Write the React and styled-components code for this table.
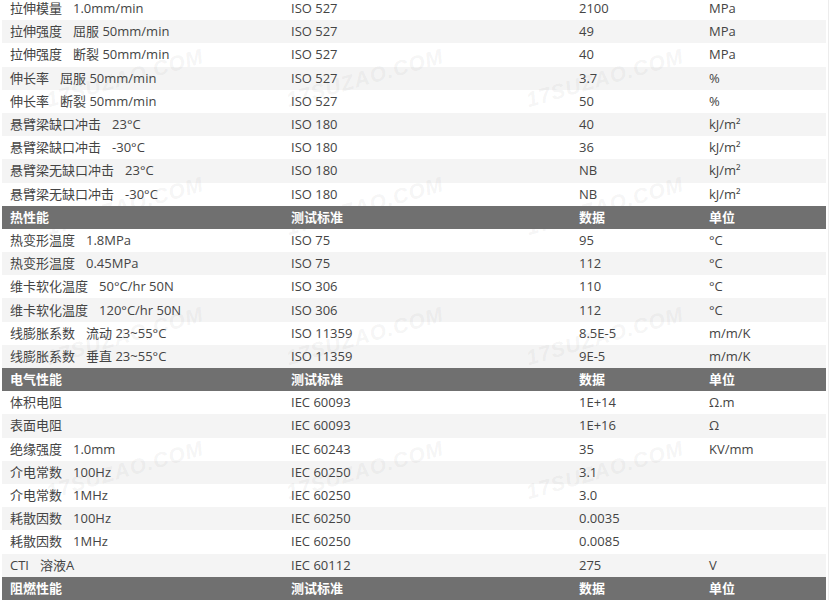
import React from "react";
import styled, { createGlobalStyle } from "styled-components";

const Global = createGlobalStyle`
  html, body { margin: 0; padding: 0; background: #fff; overflow: hidden; }
  body { font-family: "Open Sans", "Noto Sans CJK SC", sans-serif; }
`;

const Frame = styled.div`
  position: relative;
  width: 828px;
  height: 600px;
  overflow: hidden;
  border-right: 1px solid #ececec;
`;

const Table = styled.div`
  margin: -3px 0 0 2px;
  width: 824px;
  display: flex;
  flex-direction: column;
`;

const Row = styled.div`
  display: grid;
  grid-template-columns: 281px 288px 130px 1fr;
  height: 23.2px;
  align-items: center;
  background: ${(p) => (p.$head ? "#707070" : p.$alt ? "#f4f4f4" : "#ffffff")};
  color: ${(p) => (p.$head ? "#ffffff" : "#444444")};
  font-weight: ${(p) => (p.$head ? 700 : 400)};
  font-size: 13px;
`;

const Cell = styled.div`
  padding-left: 8px;
  white-space: pre;
  line-height: 23px;
  overflow: hidden;
`;

const Cond = styled.span`
  margin-left: ${(p) => p.$gap || 11}px;
`;

const Mark = styled.div`
  position: absolute;
  transform: translate(-50%, -50%) rotate(-16deg);
  font-family: "Liberation Sans", Arial, sans-serif;
  font-weight: 700;
  font-style: italic;
  font-size: 21px;
  letter-spacing: 1px;
  color: rgba(120, 120, 120, 0.08);
  pointer-events: none;
  white-space: nowrap;
`;

const sections = [
  {
    head: null,
    rows: [
      ["拉伸模量", "1.0mm/min", "ISO 527", "2100", "MPa"],
      ["拉伸强度", "屈服 50mm/min", "ISO 527", "49", "MPa"],
      ["拉伸强度", "断裂 50mm/min", "ISO 527", "40", "MPa"],
      ["伸长率", "屈服 50mm/min", "ISO 527", "3.7", "%"],
      ["伸长率", "断裂 50mm/min", "ISO 527", "50", "%"],
      ["悬臂梁缺口冲击", "23°C", "ISO 180", "40", "kJ/m²"],
      ["悬臂梁缺口冲击", "-30°C", "ISO 180", "36", "kJ/m²"],
      ["悬臂梁无缺口冲击", "23°C", "ISO 180", "NB", "kJ/m²"],
      ["悬臂梁无缺口冲击", "-30°C", "ISO 180", "NB", "kJ/m²"],
    ],
  },
  {
    head: "热性能",
    rows: [
      ["热变形温度", "1.8MPa", "ISO 75", "95", "°C"],
      ["热变形温度", "0.45MPa", "ISO 75", "112", "°C"],
      ["维卡软化温度", "50°C/hr 50N", "ISO 306", "110", "°C"],
      ["维卡软化温度", "120°C/hr 50N", "ISO 306", "112", "°C"],
      ["线膨胀系数", "流动 23~55°C", "ISO 11359", "8.5E-5", "m/m/K"],
      ["线膨胀系数", "垂直 23~55°C", "ISO 11359", "9E-5", "m/m/K"],
    ],
  },
  {
    head: "电气性能",
    rows: [
      ["体积电阻", "", "IEC 60093", "1E+14", "Ω.m"],
      ["表面电阻", "", "IEC 60093", "1E+16", "Ω"],
      ["绝缘强度", "1.0mm", "IEC 60243", "35", "KV/mm"],
      ["介电常数", "100Hz", "IEC 60250", "3.1", ""],
      ["介电常数", "1MHz", "IEC 60250", "3.0", ""],
      ["耗散因数", "100Hz", "IEC 60250", "0.0035", ""],
      ["耗散因数", "1MHz", "IEC 60250", "0.0085", ""],
      ["CTI", "溶液A", "IEC 60112", "275", "V"],
    ],
  },
  { head: "阻燃性能", rows: [] },
];

const markXs = [125, 365, 605];
const markYs = [78, 206, 336, 470];

export default function App() {
  return (
    <>
      <Global />
      <Frame>
        <Table>
          {sections.map((s, si) => (
            <React.Fragment key={si}>
              {s.head && (
                <Row $head>
                  <Cell>{s.head}</Cell>
                  <Cell>测试标准</Cell>
                  <Cell>数据</Cell>
                  <Cell>单位</Cell>
                </Row>
              )}
              {s.rows.map((r, ri) => (
                <Row key={ri} $alt={ri % 2 === 1}>
                  <Cell>
                    {r[0]}
                    {r[1] && <Cond>{r[1]}</Cond>}
                  </Cell>
                  <Cell>{r[2]}</Cell>
                  <Cell>{r[3]}</Cell>
                  <Cell>{r[4]}</Cell>
                </Row>
              ))}
            </React.Fragment>
          ))}
        </Table>
        {markYs.map((y) =>
          markXs.map((x) => (
            <Mark key={`${x}-${y}`} style={{ left: x, top: y }}>
              17SUZAO.COM
            </Mark>
          ))
        )}
      </Frame>
    </>
  );
}
